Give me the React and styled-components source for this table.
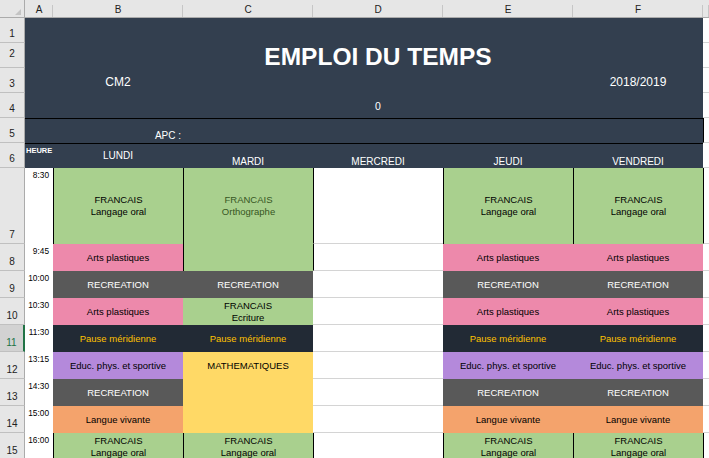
import React from 'react';
import styled, { createGlobalStyle } from 'styled-components';

const GlobalStyle = createGlobalStyle`
  *, *::before, *::after { box-sizing: border-box; }
  html, body { margin: 0; padding: 0; background: #fff; overflow: hidden; }
  body { font-family: "Liberation Sans", Arial, sans-serif; }
`;

const KINDS = {
  francais: { bg: '#A9D08E', fg: '#000' },
  ortho: { bg: '#A9D08E', fg: '#375623' },
  arts: { bg: '#ED89AB', fg: '#000' },
  recre: { bg: '#595959', fg: '#fff' },
  pause: { bg: '#222A35', fg: '#FFC000' },
  eps: { bg: '#B489DB', fg: '#000' },
  maths: { bg: '#FFD966', fg: '#000' },
  langue: { bg: '#F4A36C', fg: '#000' },
  empty: { bg: '#fff', fg: '#000' },
};

const Sheet = styled.div`
  display: grid;
  grid-template-columns: 25px 28px repeat(5, 130px) 1fr;
  grid-template-rows: 18px repeat(6, 25px) 76px repeat(9, 27px);
  width: 709px;
  height: 458px;
  overflow: hidden;
`;

const Corner = styled.div`
  grid-row: 1;
  grid-column: 1;
  position: relative;
  background: #e6e6e6;
  border-bottom: 1px solid #ababab;
  border-right: 1px solid #ababab;

  &::after {
    content: '';
    position: absolute;
    right: 3px;
    bottom: 2px;
    border-style: solid;
    border-width: 0 0 6px 6px;
    border-color: transparent transparent #c4c4c4 transparent;
  }
`;

const ColHead = styled.div`
  grid-row: 1;
  grid-column: ${p => p.$col};
  position: relative;
  display: flex;
  align-items: flex-end;
  justify-content: center;
  padding-bottom: 2px;
  background: #e6e6e6;
  border-bottom: 1px solid #ababab;
  font-size: 10px;
  color: #222;

  &::after {
    content: '';
    position: absolute;
    right: 0;
    top: 5px;
    bottom: 0;
    width: 1px;
    background: #c6c6c6;
  }
`;

const RowHead = styled.div`
  grid-column: 1;
  grid-row: ${p => p.$row + 1};
  display: flex;
  align-items: flex-end;
  justify-content: center;
  padding-bottom: ${p => (p.$lift ? 8 : 3)}px;
  background: ${p => (p.$active ? '#d2d2d2' : '#e6e6e6')};
  border-bottom: 1px solid #c0c0c0;
  border-right: ${p => (p.$active ? '2px solid #217346' : '1px solid #ababab')};
  color: ${p => (p.$active ? '#217346' : '#222')};
  font-size: 10px;
`;

const Banner = styled.div`
  grid-row: 2 / span 6;
  grid-column: 2 / span 6;
  display: grid;
  grid-template-columns: 28px repeat(5, 130px);
  grid-template-rows: repeat(4, 25px) 26px 24px;
  background: #333f4f;
  color: #fff;
`;

const Title = styled.div`
  grid-row: 2;
  grid-column: 3 / span 3;
  display: flex;
  align-items: center;
  justify-content: center;
  padding-top: 2px;
  font-size: 24.5px;
  font-weight: bold;
  white-space: nowrap;
`;

const Caption = styled.div`
  grid-row: 3;
  grid-column: ${p => p.$col};
  display: flex;
  align-items: center;
  justify-content: center;
  padding-top: 3px;
  font-size: 12px;
`;

const Zero = styled.div`
  grid-row: 4;
  grid-column: 4;
  display: flex;
  align-items: center;
  justify-content: center;
  font-size: 10.5px;
`;

const ApcBar = styled.div`
  grid-row: 5;
  grid-column: 1 / -1;
  display: flex;
  align-items: flex-end;
  border-top: 1px solid #000;
  border-bottom: 1px solid #000;
`;

const ApcLabel = styled.div`
  width: 158px;
  padding: 0 2px 2px 0;
  text-align: right;
  font-size: 10px;
`;

const Heure = styled.div`
  grid-row: 6;
  grid-column: 1;
  padding: 2px 0 0 1px;
  font-size: 7.5px;
  font-weight: bold;
`;

const DayLabel = styled.div`
  grid-row: 6;
  grid-column: ${p => p.$col};
  display: flex;
  align-items: ${p => (p.$mid ? 'center' : 'flex-end')};
  justify-content: center;
  padding: ${p => (p.$mid ? '0 0 1px' : '0 0 1px')};
  font-size: 10px;
`;

const TimeCell = styled.div`
  grid-column: 2;
  grid-row: ${p => p.$row + 1};
  padding: 2px 4px 0 0;
  background: #fff;
  text-align: right;
  font-size: 8.3px;
  color: #000;
`;

const Slot = styled.div`
  grid-column: ${p => p.$col};
  grid-row: ${p => p.$row + 1} / span ${p => p.$rows || 1};
  display: flex;
  flex-direction: column;
  align-items: center;
  justify-content: ${p => (p.$top ? 'flex-start' : 'center')};
  padding-top: ${p => p.$pad || 0}px;
  background: ${p => KINDS[p.$kind].bg};
  color: ${p => KINDS[p.$kind].fg};
  border-left: ${p => (p.$edge ? '1px solid #000' : '0')};
  border-bottom: ${p => (p.$kind === 'empty' ? '1px solid #d4d4d4' : '0')};
  font-size: 9.5px;
  line-height: 12px;
  white-space: nowrap;
`;

const Spare = styled.div`
  grid-column: 8;
  grid-row: ${p => p.$row + 1};
  background: #fff;
  border-bottom: 1px solid #d4d4d4;
  border-left: ${p => (p.$edge ? '1px solid #000' : '0')};
`;

const TIMES = ['8:30', '9:45', '10:00', '10:30', '11:30', '13:15', '14:30', '15:00', '16:00'];

const FR = ['FRANCAIS', 'Langage oral'];

const WEEK = [
  { row: 7, kind: 'francais', text: FR, edge: true },
  { row: 8, kind: 'arts', text: ['Arts plastiques'] },
  { row: 9, kind: 'recre', text: ['RECREATION'] },
  { row: 10, kind: 'arts', text: ['Arts plastiques'] },
  { row: 11, kind: 'pause', text: ['Pause méridienne'] },
  { row: 12, kind: 'eps', text: ['Educ. phys. et sportive'] },
  { row: 13, kind: 'recre', text: ['RECREATION'] },
  { row: 14, kind: 'langue', text: ['Langue vivante'] },
  { row: 15, kind: 'francais', text: FR, edge: true, top: true, pad: 2 },
];

const TUESDAY = [
  { row: 7, kind: 'ortho', text: ['FRANCAIS', 'Orthographe'], edge: true },
  { row: 8, kind: 'francais', text: [], edge: true },
  { row: 9, kind: 'recre', text: ['RECREATION'] },
  { row: 10, kind: 'francais', text: ['FRANCAIS', 'Ecriture'] },
  { row: 11, kind: 'pause', text: ['Pause méridienne'] },
  { row: 12, rows: 3, kind: 'maths', text: ['MATHEMATIQUES'], top: true, pad: 8 },
  { row: 15, kind: 'francais', text: FR, edge: true, top: true, pad: 2 },
];

const WEDNESDAY = [7, 8, 9, 10, 11, 12, 13, 14, 15].map(row => ({
  row,
  kind: 'empty',
  text: [],
  edge: row === 7 || row === 8 || row === 15,
}));

const DAYS = [
  { col: 3, items: WEEK },
  { col: 4, items: TUESDAY },
  { col: 5, items: WEDNESDAY },
  { col: 6, items: WEEK },
  { col: 7, items: WEEK },
];

const ROWS = Array.from({ length: 15 }, (_, i) => i + 1);

export default function App() {
  return (
    <>
      <GlobalStyle />
      <Sheet>
        <Corner />
        {['A', 'B', 'C', 'D', 'E', 'F', ''].map((l, i) => (
          <ColHead key={i} $col={i + 2}>{l}</ColHead>
        ))}
        {ROWS.map(r => (
          <RowHead key={r} $row={r} $active={r === 11} $lift={r === 2}>{r}</RowHead>
        ))}

        <Banner>
          <Title>EMPLOI DU TEMPS</Title>
          <Caption $col={2}>CM2</Caption>
          <Caption $col={6}>2018/2019</Caption>
          <Zero>0</Zero>
          <ApcBar>
            <ApcLabel>APC :</ApcLabel>
          </ApcBar>
          <Heure>HEURE</Heure>
          <DayLabel $col={2} $mid>LUNDI</DayLabel>
          <DayLabel $col={3}>MARDI</DayLabel>
          <DayLabel $col={4}>MERCREDI</DayLabel>
          <DayLabel $col={5}>JEUDI</DayLabel>
          <DayLabel $col={6}>VENDREDI</DayLabel>
        </Banner>

        {TIMES.map((t, i) => (
          <TimeCell key={t} $row={i + 7}>{t}</TimeCell>
        ))}

        {DAYS.map(day =>
          day.items.map(s => (
            <Slot
              key={`${day.col}-${s.row}`}
              $col={day.col}
              $row={s.row}
              $rows={s.rows}
              $kind={s.kind}
              $edge={s.edge}
              $top={s.top}
              $pad={s.pad}
            >
              {s.text.map(line => (
                <span key={line}>{line}</span>
              ))}
            </Slot>
          ))
        )}

        {ROWS.map(r => (
          <Spare key={r} $row={r} $edge={r === 5 || r === 7 || r === 15} />
        ))}
      </Sheet>
    </>
  );
}
